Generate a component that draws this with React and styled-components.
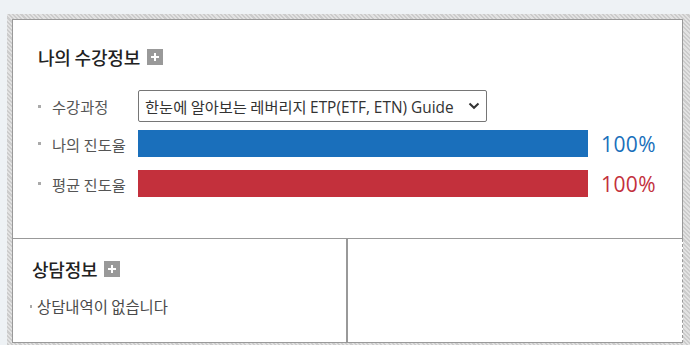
import React from "react";
import styled, { createGlobalStyle } from "styled-components";

const Global = createGlobalStyle`
  html, body { margin: 0; padding: 0; background: #eef2f5; }
  body { font-family: "Noto Sans CJK KR", "Open Sans", sans-serif; }
  * { box-sizing: border-box; }
`;

const hatch = `repeating-linear-gradient(45deg, #cccccc 0px, #cccccc 1.5px, #e2e2e2 1.5px, #e2e2e2 3px)`;

const Page = styled.div`
  padding: 14px 0 0 7px;
  width: 690px;
  height: 345px;
  overflow: hidden;
`;

const Frame = styled.div`
  background: ${hatch};
  padding: 5px 0 6px 5px;
  width: 683px;
  overflow: hidden;
`;

const Inner = styled.div`
  width: 671px;
`;

const Top = styled.section`
  background: #fff;
  border: 1px solid #999;
  height: 220px;
  padding: 26px 0 0 25px;
`;

const Title = styled.h2`
  margin: 0;
  display: flex;
  align-items: center;
  gap: 7px;
  font-size: 18px;
  line-height: 22px;
  font-weight: 500;
  color: #222;
  letter-spacing: -0.2px;
`;

const Plus = styled.span`
  display: inline-block;
  position: relative;
  width: 16px;
  height: 16px;
  background: #999;
  &::before, &::after {
    content: "";
    position: absolute;
    background: #fff;
  }
  &::before { left: 4px; top: 7px; width: 8px; height: 2px; }
  &::after { left: 7px; top: 4px; width: 2px; height: 8px; }
`;

const Row = styled.div`
  display: flex;
  align-items: center;
  margin-top: ${(p) => p.$mt}px;
  height: ${(p) => p.$h}px;
`;

const Label = styled.div`
  display: flex;
  align-items: center;
  width: 100px;
  flex-shrink: 0;
  font-size: 15.3px;
  color: #555;
  &::before {
    content: "";
    width: 3px;
    height: 3px;
    background: #aaa;
    margin-right: 11px;
  }
`;

const Select = styled.div`
  width: 349px;
  height: 32px;
  border: 1px solid #767676;
  border-radius: 2px;
  display: flex;
  align-items: center;
  justify-content: space-between;
  padding: 0 6px 0 6px;
  font-family: "Noto Sans CJK KR", sans-serif;
  font-size: 15.3px;
  color: #333;
`;

const Latin = styled.span`
  font-family: "Open Sans", "Noto Sans CJK KR", sans-serif;
  font-size: 15.4px;
`;

const Bar = styled.div`
  width: 450px;
  height: 27px;
  background: ${(p) => p.$color};
`;

const Pct = styled.div`
  margin-left: 13px;
  font-family: "Open Sans", sans-serif;
  font-size: 21px;
  color: ${(p) => p.$color};
  letter-spacing: 0.4px;
`;

const Bottom = styled.div`
  display: flex;
  height: 104px;
`;

const Panel = styled.section`
  background: #fff;
  height: 104px;
  border-bottom: 1px solid #999;
`;

const LeftPanel = styled(Panel)`
  width: 335px;
  border-left: 1px solid #999;
  border-right: 1px solid #999;
  padding: 19px 0 0 19px;
`;

const RightPanel = styled(Panel)`
  flex: 1;
  border-left: 1px solid #999;
  border-right: 1px dashed #999;
`;

const Empty = styled.div`
  display: flex;
  align-items: center;
  margin-top: 15px;
  margin-left: -2px;
  font-size: 15.4px;
  color: #4a4a4a;
  &::before {
    content: "";
    width: 2px;
    height: 3px;
    background: #aaa;
    margin-right: 5px;
  }
`;

const Chevron = () => (
  <svg width="12" height="8" viewBox="0 0 12 8">
    <path d="M1.5 1.5 L6 5.8 L10.5 1.5" fill="none" stroke="#333" strokeWidth="2" />
  </svg>
);

export default function App() {
  return (
    <Page>
      <Global />
      <Frame>
        <Inner>
          <Top>
            <Title>
              나의 수강정보 <Plus />
            </Title>
            <Row $mt={22} $h={32}>
              <Label>수강과정</Label>
              <Select>
                <span>
                  한눈에 알아보는 레버리지 <Latin>ETP(ETF, ETN) Guide</Latin>
                </span>
                <Chevron />
              </Select>
            </Row>
            <Row $mt={8} $h={27}>
              <Label>나의 진도율</Label>
              <Bar $color="#1a6fbb" />
              <Pct $color="#1a6fbb">100%</Pct>
            </Row>
            <Row $mt={13} $h={27}>
              <Label>평균 진도율</Label>
              <Bar $color="#c3303c" />
              <Pct $color="#c3303c">100%</Pct>
            </Row>
          </Top>
          <Bottom>
            <LeftPanel>
              <Title>
                상담정보 <Plus />
              </Title>
              <Empty>상담내역이 없습니다</Empty>
            </LeftPanel>
            <RightPanel />
          </Bottom>
        </Inner>
      </Frame>
    </Page>
  );
}
